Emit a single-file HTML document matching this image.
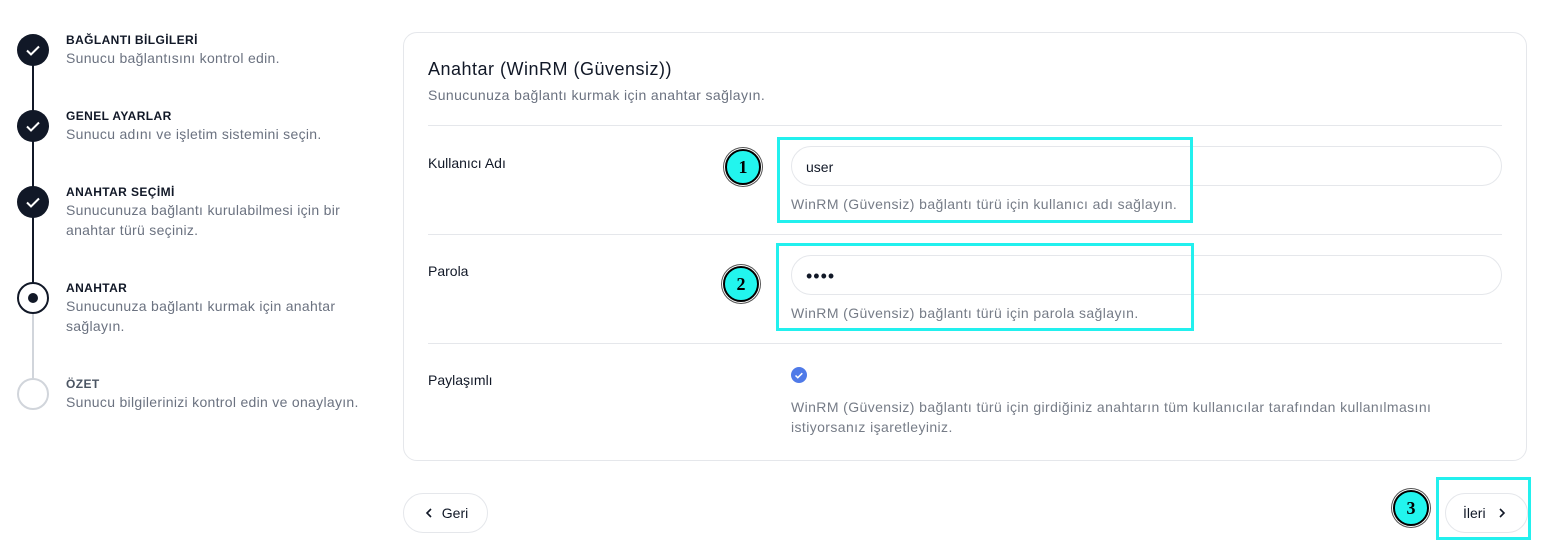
<!DOCTYPE html>
<html><head><meta charset="utf-8"><style>
*{box-sizing:border-box;margin:0;padding:0}
body{width:1541px;height:545px;background:#fff;font-family:"Liberation Sans",sans-serif;position:relative;overflow:hidden;color:#111827}
.abs{position:absolute}
.st{font-size:12px;font-weight:bold;letter-spacing:.4px;color:#111827}
.sd{font-size:14px;color:#6b7280;line-height:20px;letter-spacing:.3px}
.dot{position:absolute;left:17px;width:32px;height:32px;border-radius:50%;background:#111827}
.line{position:absolute;left:32px;width:2px}
.card{position:absolute;left:403px;top:32px;width:1124px;height:429px;border:1px solid #e5e7eb;border-radius:14px}
.hr{position:absolute;left:428px;width:1074px;height:1px;background:#e5e7eb}
.lab{position:absolute;left:428px;font-size:14px;color:#111827}
.inp{position:absolute;left:791px;width:711px;height:40px;border:1px solid #e5e7eb;border-radius:20px;font-size:14px;padding:12px 0 0 14px}
.help{position:absolute;left:791px;font-size:14px;color:#767c87;line-height:20px;letter-spacing:.4px}
.cy{position:absolute;border:3px solid #22f0ee}
.num{position:absolute;width:36px;height:36px;border-radius:50%;background:#22f5ee;border:2px solid #000;box-shadow:0 0 0 1px #fff,0 0 0 2px #555;font:bold 18px "Liberation Serif",serif;text-align:center;line-height:32px;color:#000}
.btn{position:absolute;height:40px;border:1px solid #e5e7eb;border-radius:20px;font-size:14px;line-height:38px;color:#111827}
</style></head><body>
<div class="line" style="top:52px;height:248px;background:#111827"></div>
<div class="line" style="top:300px;height:95px;background:#d1d5db"></div>
<div class="dot" style="top:34px"><svg width="32" height="32"><path d="M10 16.5l4 4 8-8" stroke="#fff" stroke-width="2" fill="none"/></svg></div>
<div class="dot" style="top:110px"><svg width="32" height="32"><path d="M10 16.5l4 4 8-8" stroke="#fff" stroke-width="2" fill="none"/></svg></div>
<div class="dot" style="top:186px"><svg width="32" height="32"><path d="M10 16.5l4 4 8-8" stroke="#fff" stroke-width="2" fill="none"/></svg></div>
<div class="dot" style="top:282px;background:#fff;border:2px solid #111827"><div style="position:absolute;left:9px;top:9px;width:10px;height:10px;border-radius:50%;background:#111827"></div></div>
<div class="dot" style="top:378px;background:#fff;border:2px solid #d1d5db"></div>
<div class="abs st" style="left:66px;top:33px">BAĞLANTI BİLGİLERİ</div>
<div class="abs sd" style="left:66px;top:48px">Sunucu bağlantısını kontrol edin.</div>
<div class="abs st" style="left:66px;top:109px">GENEL AYARLAR</div>
<div class="abs sd" style="left:66px;top:124px">Sunucu adını ve işletim sistemini seçin.</div>
<div class="abs st" style="left:66px;top:185px">ANAHTAR SEÇİMİ</div>
<div class="abs sd" style="left:66px;top:200px">Sunucunuza bağlantı kurulabilmesi için bir<br>anahtar türü seçiniz.</div>
<div class="abs st" style="left:66px;top:281px">ANAHTAR</div>
<div class="abs sd" style="left:66px;top:296px">Sunucunuza bağlantı kurmak için anahtar<br>sağlayın.</div>
<div class="abs st" style="left:66px;top:377px;color:#4b5563">ÖZET</div>
<div class="abs sd" style="left:66px;top:392px">Sunucu bilgilerinizi kontrol edin ve onaylayın.</div>

<div class="card"></div>
<div class="abs" style="left:428px;top:59px;font-size:18px;letter-spacing:.5px">Anahtar (WinRM (Güvensiz))</div>
<div class="abs" style="left:428px;top:87px;font-size:14px;color:#6b7280;letter-spacing:.4px">Sunucunuza bağlantı kurmak için anahtar sağlayın.</div>
<div class="hr" style="top:125px"></div>
<div class="lab" style="top:155px">Kullanıcı Adı</div>
<div class="inp" style="top:146px">user</div>
<div class="help" style="top:194px">WinRM (Güvensiz) bağlantı türü için kullanıcı adı sağlayın.</div>
<div class="hr" style="top:234px"></div>
<div class="lab" style="top:263px">Parola</div>
<div class="inp" style="top:255px;font-size:18px;padding-top:10px;letter-spacing:1px">••••</div>
<div class="help" style="top:303px">WinRM (Güvensiz) bağlantı türü için parola sağlayın.</div>
<div class="hr" style="top:343px"></div>
<div class="lab" style="top:372px">Paylaşımlı</div>
<div class="abs" style="left:791px;top:367px;width:16px;height:16px;border-radius:50%;background:#4f7ae8"><svg width="16" height="16"><path d="M4.5 8.5l2.3 2.2 4.5-4.5" stroke="#fff" stroke-width="1.5" fill="none"/></svg></div>
<div class="help" style="top:397px">WinRM (Güvensiz) bağlantı türü için girdiğiniz anahtarın tüm kullanıcılar tarafından kullanılmasını<br>istiyorsanız işaretleyiniz.</div>

<div class="cy" style="left:777px;top:137px;width:416px;height:86px"></div>
<div class="cy" style="left:776px;top:243px;width:418px;height:88px"></div>
<div class="cy" style="left:1436px;top:477px;width:95px;height:63px"></div>
<div class="num" style="left:725px;top:149px">1</div>
<div class="num" style="left:723px;top:266px">2</div>
<div class="num" style="left:1393px;top:490px">3</div>

<div class="btn" style="left:403px;top:493px;width:85px;padding-left:20px"><svg width="10" height="12" style="vertical-align:-1px"><path d="M7 2L3 6l4 4" stroke="#111827" stroke-width="1.6" fill="none"/></svg>&nbsp; Geri</div>
<div class="btn" style="left:1445px;top:493px;width:83px;padding-left:17px">İleri &nbsp;&nbsp;<svg width="10" height="12" style="vertical-align:-1px"><path d="M3 2l4 4-4 4" stroke="#111827" stroke-width="1.6" fill="none"/></svg></div>
</body></html>
